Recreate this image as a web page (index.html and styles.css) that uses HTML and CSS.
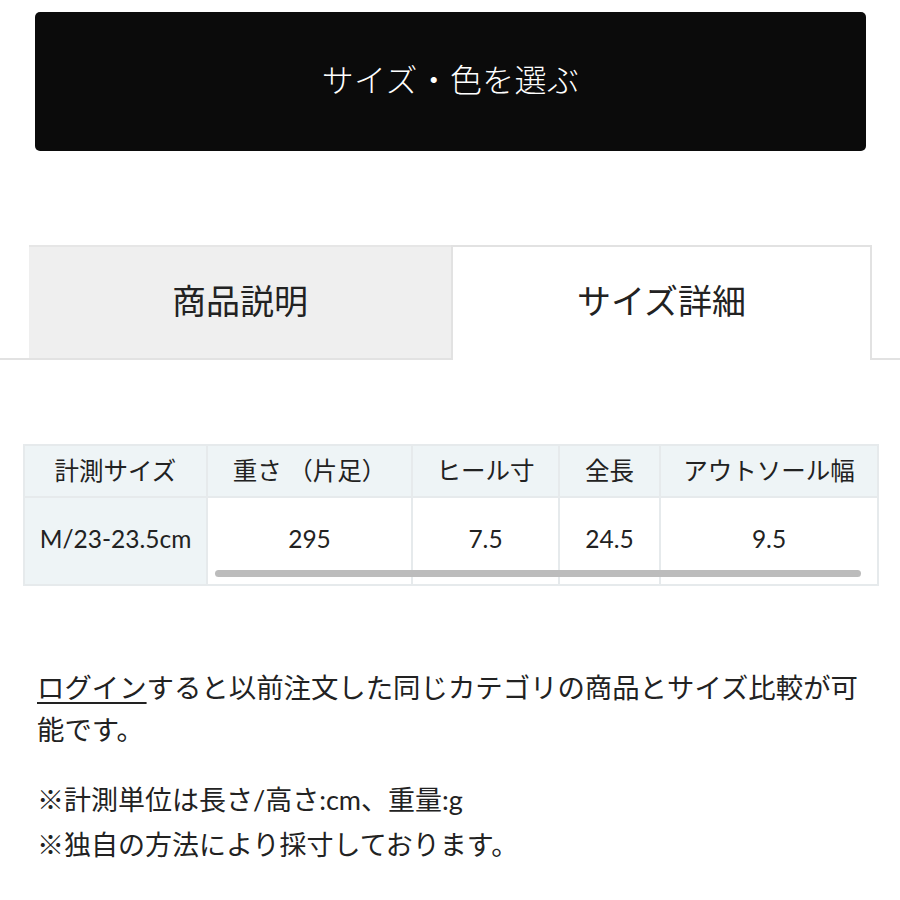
FILE: index.html
```html
<!DOCTYPE html>
<html lang="ja">
<head>
<meta charset="utf-8">
<link rel="stylesheet" href="styles.css">
</head>
<body>
<div class="page">
  <button class="select-btn">サイズ・色を選ぶ</button>

  <div class="tabs">
    <div class="tab">商品説明</div>
    <div class="tab active">サイズ詳細</div>
  </div>

  <div class="table-wrap">
    <table class="size-table">
      <colgroup>
        <col class="c1">
        <col class="c2">
        <col class="c3">
        <col class="c4">
        <col class="c5">
      </colgroup>
      <thead>
        <tr>
          <th>計測サイズ</th>
          <th>重さ （片足）</th>
          <th>ヒール寸</th>
          <th>全長</th>
          <th>アウトソール幅</th>
        </tr>
      </thead>
      <tbody>
        <tr>
          <td class="first">M/23-23.5cm</td>
          <td>295</td>
          <td>7.5</td>
          <td>24.5</td>
          <td>9.5</td>
        </tr>
      </tbody>
    </table>
    <div class="scrollbar"></div>
  </div>

  <p class="login-note"><a href="#" class="login-link">ログイン</a>すると以前注文した同じカテゴリの商品とサイズ比較が可能です。</p>

  <p class="notes">※計測単位は長さ/高さ:cm、重量:g<br>※独自の方法により採寸しております。</p>
</div>
</body>
</html>
```

FILE: styles.css
```css
html, body {
  margin: 0;
  padding: 0;
  background: #ffffff;
}

body {
  font-family: Lato, "Noto Sans CJK JP", sans-serif;
  color: #222222;
}

.page {
  padding-top: 12px;
}

.select-btn {
  display: flex;
  align-items: center;
  justify-content: center;
  box-sizing: border-box;
  width: 831px;
  height: 139px;
  margin: 0 0 0 35px;
  padding: 0 0 8px 0;
  border: none;
  border-radius: 5px;
  background: #0b0b0b;
  color: #ffffff;
  font-family: "Noto Sans CJK JP", sans-serif;
  font-size: 32px;
  font-weight: 300;
  letter-spacing: 0.3px;
}

.tabs {
  display: flex;
  margin-top: 94px;
  padding-left: 29px;
  border-bottom: 2px solid #e2e2e2;
}

.tab {
  display: flex;
  align-items: center;
  justify-content: center;
  box-sizing: border-box;
  height: 113px;
  padding-bottom: 6px;
  font-family: "Noto Sans CJK JP", sans-serif;
  font-size: 34px;
  font-weight: 400;
  color: #222222;
}

.tab:first-child {
  width: 422px;
  background: #efefef;
  border-top: 2px solid #e6e6e6;
}

.tab.active {
  width: 421px;
  background: #ffffff;
  border: 2px solid #e2e2e2;
  border-bottom: none;
  margin-bottom: -2px;
  height: 115px;
  padding-bottom: 8px;
}

.table-wrap {
  position: relative;
  margin: 84px 0 0 23px;
  width: 855px;
}

.size-table {
  border-collapse: collapse;
  table-layout: fixed;
  width: 854px;
  font-size: 24.5px;
}

.size-table th,
.size-table td {
  border: 2px solid #e6eaec;
  text-align: center;
  padding: 0;
  font-weight: 400;
  white-space: nowrap;
}

.size-table th {
  height: 47px;
  background: #eef4f6;
  padding-bottom: 3px;
}

.size-table td {
  height: 80px;
  background: #ffffff;
  padding-bottom: 6px;
}

.size-table td.first {
  background: #eef4f6;
}

.c1 { width: 183px; }
.c2 { width: 205px; }
.c3 { width: 147px; }
.c4 { width: 101px; }
.c5 { width: 218px; }

.scrollbar {
  position: absolute;
  left: 192px;
  right: 17px;
  bottom: 9px;
  height: 7px;
  border-radius: 4px;
  background: #bcbcbc;
}

.login-note {
  margin: 79px 35px 0 37px;
  font-family: "Noto Sans CJK JP", sans-serif;
  font-size: 27.4px;
  line-height: 42px;
  font-weight: 400;
}

.login-link {
  color: #222222;
  text-decoration: underline;
  text-decoration-thickness: 2px;
  text-underline-offset: 4px;
}

.notes {
  margin: 28px 35px 0 37px;
  font-size: 27px;
  line-height: 45px;
}
```
